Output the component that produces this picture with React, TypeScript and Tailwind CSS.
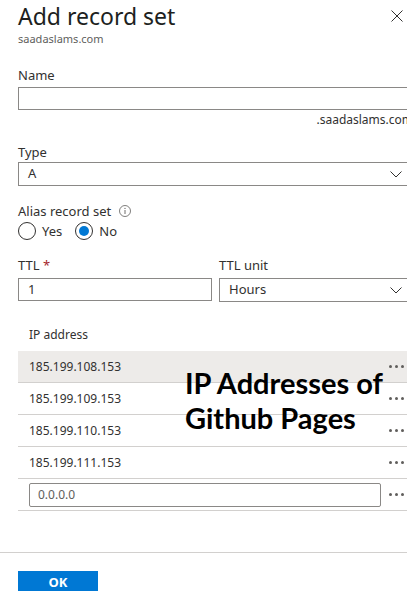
import React from "react";

const font = { fontFamily: '"Noto Sans", "Open Sans", sans-serif' };

function Chevron() {
  return (
    <svg width="12" height="7" viewBox="0 0 12 7" className="shrink-0">
      <path d="M0.5 0.5 L6 6 L11.5 0.5" fill="none" stroke="#323130" strokeWidth="1" />
    </svg>
  );
}

function Dots() {
  return (
    <div className="flex items-center gap-[3px] pr-[7px]">
      <span className="w-[3px] h-[3px] rounded-full bg-[#605e5c]" />
      <span className="w-[3px] h-[3px] rounded-full bg-[#605e5c]" />
      <span className="w-[3px] h-[3px] rounded-full bg-[#605e5c]" />
    </div>
  );
}

const ips = ["185.199.108.153", "185.199.109.153", "185.199.110.153", "185.199.111.153"];

export default function App() {
  return (
    <div className="w-[407px] h-[591px] overflow-hidden bg-white relative text-[#323130]" style={font}>
      <div className="w-[411px] pl-[18px]">
        <div className="flex items-start justify-between">
          <h1 className="text-[23px] leading-[30px] pt-[1px] font-normal text-[#201f1e]">Add record set</h1>
          <svg width="12" height="12" viewBox="0 0 12 12" className="mt-[10px] mr-[8px]">
            <path d="M0.5 0.5 L11.5 11.5 M11.5 0.5 L0.5 11.5" stroke="#323130" strokeWidth="1" />
          </svg>
        </div>
        <div className="text-[11px] leading-[16px] text-[#605e5c]">saadaslams.com</div>

        <div className="mt-[19px] text-[13px] leading-[18px]">Name</div>
        <div className="mt-[3px] h-[23px] border border-[#8a8886] bg-white" />
        <div className="text-right text-[12px] leading-[16px] mt-[2px] -mr-[2px]">.saadaslams.com</div>

        <div className="mt-[15px] text-[13px] leading-[18px]">Type</div>
        <div className="mt-[1px] h-[24px] border border-[#8a8886] flex items-center justify-between pl-[9px] pr-[8px] text-[13px]">
          <span>A</span>
          <Chevron />
        </div>

        <div className="mt-[16px] flex items-center gap-[8px] text-[13px] leading-[18px]">
          <span>Alias record set</span>
          <svg width="12" height="12" viewBox="0 0 12 12">
            <circle cx="6" cy="6" r="5.5" fill="none" stroke="#605e5c" strokeWidth="0.8" />
            <path d="M6 5 V9" stroke="#605e5c" strokeWidth="0.9" />
            <circle cx="6" cy="3.4" r="0.6" fill="#605e5c" />
          </svg>
        </div>
        <div className="mt-[2px] flex items-center text-[13px] leading-[18px]">
          <span className="w-[18px] h-[18px] rounded-full border border-[#323130]" />
          <span className="ml-[6px]">Yes</span>
          <span className="ml-[13px] w-[18px] h-[18px] rounded-full border border-[#323130] flex items-center justify-center">
            <span className="w-[10px] h-[10px] rounded-full bg-[#0078d4]" />
          </span>
          <span className="ml-[6px]">No</span>
        </div>

        <div className="mt-[16px] flex gap-[7px]">
          <div className="w-[194px]">
            <div className="text-[13px] leading-[18px]">
              TTL <span className="text-[#a4262c]">*</span>
            </div>
            <div className="mt-[4px] h-[23px] border border-[#8a8886] flex items-center pl-[9px] text-[13px]">1</div>
          </div>
          <div className="flex-1">
            <div className="text-[13px] leading-[18px]">TTL unit</div>
            <div className="mt-[4px] h-[24px] border border-[#8a8886] flex items-center justify-between pl-[9px] pr-[8px] text-[13px]">
              <span>Hours</span>
              <Chevron />
            </div>
          </div>
        </div>

        <div className="mt-[25px] pl-[11px] text-[12px] leading-[16px] pb-[8px]">IP address</div>
        <div className="relative">
          {ips.map((ip, i) => (
            <div
              key={ip}
              className={`h-[32px] border-b border-[#d2d0ce] flex items-center justify-between pl-[11px] text-[12px] ${i === 0 ? "bg-[#edebe9]" : ""}`}
            >
              <span>{ip}</span>
              <Dots />
            </div>
          ))}
          <div className="h-[32px] border-b border-[#d2d0ce] flex items-center justify-between pl-[11px]">
            <div className="w-[352px] h-[24px] border border-[#8a8886] rounded-[2px] flex items-center pl-[8px] text-[12px] text-[#605e5c]">
              0.0.0.0
            </div>
            <Dots />
          </div>
          <div
            className="absolute left-[167px] top-[14px] text-[29px] leading-[35px] font-bold text-black"
            style={{ fontFamily: 'Lato, "Open Sans", sans-serif' }}
          >
            IP Addresses of
            <br />
            Github Pages
          </div>
        </div>
      </div>

      <div className="mt-[41px] border-t border-[#d2d0ce] pt-[16px] pl-[18px]">
        <button className="w-[80px] h-[24px] bg-[#0078d4] text-white text-[13px] font-bold">OK</button>
      </div>
    </div>
  );
}
